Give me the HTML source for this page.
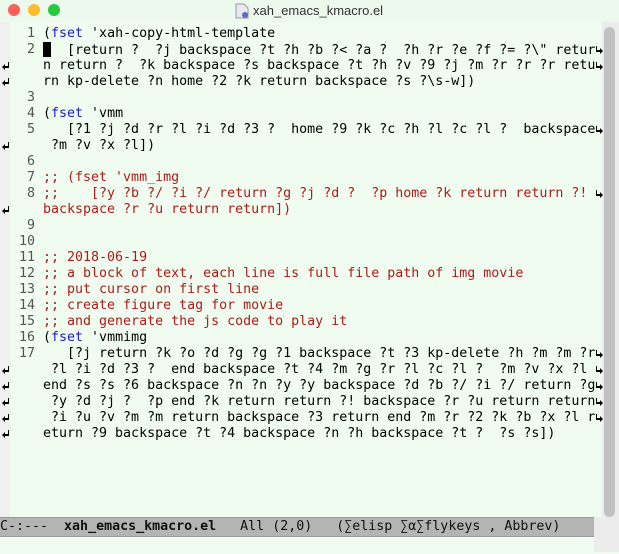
<!DOCTYPE html>
<html><head><meta charset="utf-8"><style>
html,body{margin:0;padding:0;width:619px;height:554px;overflow:hidden;background:#effcef;}
.t{position:absolute;left:0;top:0;width:619px;height:22px;background:#edf9ed;}
.dot{position:absolute;top:4px;width:12px;height:12px;border-radius:50%;}
.title{position:absolute;left:253px;top:3px;font:13px "Liberation Sans",sans-serif;color:#333;}
.lf{position:absolute;left:0;top:22px;width:10px;height:495px;background:#f0f0f0;}
.sb{position:absolute;left:594px;top:22px;width:25px;height:530px;background:#ececec;}
.rf{position:absolute;left:594px;top:22px;width:8px;height:495px;background:#effcef;}
.th{position:absolute;left:604px;top:27px;width:11px;height:490px;background:#c1c1c1;border-radius:6px;}
.row{position:absolute;left:0;width:619px;height:16px;line-height:16px;font:13.3px "DejaVu Sans Mono",monospace;white-space:pre;color:#000;}
.n{position:absolute;left:0;width:35px;text-align:right;color:#555;}
.c{position:absolute;left:43px;}
.k{color:#1a1ac8}.m{color:#b01a1a}
.w,.r{position:absolute;top:4px;width:7px;height:8px;}
.w{left:2px}.r{left:596px}
.ml{position:absolute;left:0;top:517px;width:594px;height:18px;background:#b4b4b4;border-top:1px solid #999;border-bottom:1px solid #999;font:13.3px "DejaVu Sans Mono",monospace;line-height:17px;white-space:pre;color:#111;}
.cur{display:inline-block;width:8px;height:15px;background:#000;vertical-align:-3px;}
</style></head><body>
<svg width="0" height="0" style="position:absolute"><defs>
<symbol id="wl" viewBox="0 0 7 8"><path d="M6 0v4H3V2L0 5l3 3V6h4V0z" fill="#000"/></symbol>
<symbol id="wr" viewBox="0 0 7 8"><path d="M1 0v4h3V2l3 3-3 3V6H0V0z" fill="#000"/></symbol>
</defs></svg>
<div class="t"></div>
<div class="dot" style="left:8px;background:#fc5f57"></div>
<div class="dot" style="left:28px;background:#fdbc2e"></div>
<div class="dot" style="left:48px;background:#28c840"></div>
<svg style="position:absolute;left:235px;top:3px" width="14" height="16"><path d="M1 1h8l4 4v10H1z" fill="#e8e8f0" stroke="#999"/><circle cx="10" cy="12" r="3" fill="#5a6bc8"/></svg>
<div class="title">xah_emacs_kmacro.el</div>
<div class="lf"></div>
<div class="sb"></div><div class="rf"></div><div class="th"></div>

<div class="row" style="top:26px"><span class="n">1</span><span class="c">(<span class="k">fset</span> 'xah-copy-html-template</span></div>
<div class="row" style="top:42px"><span class="n">2</span><span class="c"><span class="cur"></span>  [return ?  ?j backspace ?t ?h ?b ?&lt; ?a ?  ?h ?r ?e ?f ?= ?\" retur</span><svg class="r"><use href="#wr"/></svg></div>
<div class="row" style="top:58px"><svg class="w"><use href="#wl"/></svg><span class="c">n return ?  ?k backspace ?s backspace ?t ?h ?v ?9 ?j ?m ?r ?r ?r retu</span><svg class="r"><use href="#wr"/></svg></div>
<div class="row" style="top:74px"><svg class="w"><use href="#wl"/></svg><span class="c">rn kp-delete ?n home ?2 ?k return backspace ?s ?\s-w])</span></div>
<div class="row" style="top:90px"><span class="n">3</span></div>
<div class="row" style="top:106px"><span class="n">4</span><span class="c">(<span class="k">fset</span> 'vmm</span></div>
<div class="row" style="top:122px"><span class="n">5</span><span class="c">   [?1 ?j ?d ?r ?l ?i ?d ?3 ?  home ?9 ?k ?c ?h ?l ?c ?l ?  backspace</span><svg class="r"><use href="#wr"/></svg></div>
<div class="row" style="top:138px"><svg class="w"><use href="#wl"/></svg><span class="c"> ?m ?v ?x ?l])</span></div>
<div class="row" style="top:154px"><span class="n">6</span></div>
<div class="row" style="top:170px"><span class="n">7</span><span class="c m">;; (fset 'vmm_img</span></div>
<div class="row" style="top:186px"><span class="n">8</span><span class="c m">;;    [?y ?b ?/ ?i ?/ return ?g ?j ?d ?  ?p home ?k return return ?!</span><svg class="r"><use href="#wr"/></svg></div>
<div class="row" style="top:202px"><svg class="w"><use href="#wl"/></svg><span class="c m">backspace ?r ?u return return])</span></div>
<div class="row" style="top:218px"><span class="n">9</span></div>
<div class="row" style="top:234px"><span class="n">10</span></div>
<div class="row" style="top:250px"><span class="n">11</span><span class="c m">;; 2018-06-19</span></div>
<div class="row" style="top:266px"><span class="n">12</span><span class="c m">;; a block of text, each line is full file path of img movie</span></div>
<div class="row" style="top:282px"><span class="n">13</span><span class="c m">;; put cursor on first line</span></div>
<div class="row" style="top:298px"><span class="n">14</span><span class="c m">;; create figure tag for movie</span></div>
<div class="row" style="top:314px"><span class="n">15</span><span class="c m">;; and generate the js code to play it</span></div>
<div class="row" style="top:330px"><span class="n">16</span><span class="c">(<span class="k">fset</span> 'vmmimg</span></div>
<div class="row" style="top:346px"><span class="n">17</span><span class="c">   [?j return ?k ?o ?d ?g ?g ?1 backspace ?t ?3 kp-delete ?h ?m ?m ?r</span><svg class="r"><use href="#wr"/></svg></div>
<div class="row" style="top:362px"><svg class="w"><use href="#wl"/></svg><span class="c"> ?l ?i ?d ?3 ?  end backspace ?t ?4 ?m ?g ?r ?l ?c ?l ?  ?m ?v ?x ?l </span><svg class="r"><use href="#wr"/></svg></div>
<div class="row" style="top:378px"><svg class="w"><use href="#wl"/></svg><span class="c">end ?s ?s ?6 backspace ?n ?n ?y ?y backspace ?d ?b ?/ ?i ?/ return ?g</span><svg class="r"><use href="#wr"/></svg></div>
<div class="row" style="top:394px"><svg class="w"><use href="#wl"/></svg><span class="c"> ?y ?d ?j ?  ?p end ?k return return ?! backspace ?r ?u return return</span><svg class="r"><use href="#wr"/></svg></div>
<div class="row" style="top:410px"><svg class="w"><use href="#wl"/></svg><span class="c"> ?i ?u ?v ?m ?m return backspace ?3 return end ?m ?r ?2 ?k ?b ?x ?l r</span><svg class="r"><use href="#wr"/></svg></div>
<div class="row" style="top:426px"><svg class="w"><use href="#wl"/></svg><span class="c">eturn ?9 backspace ?t ?4 backspace ?n ?h backspace ?t ?  ?s ?s])</span></div>

<div class="ml">C-:---  <b>xah_emacs_kmacro.el</b>   All (2,0)   (∑elisp ∑α∑flykeys , Abbrev)</div>
</body></html>
